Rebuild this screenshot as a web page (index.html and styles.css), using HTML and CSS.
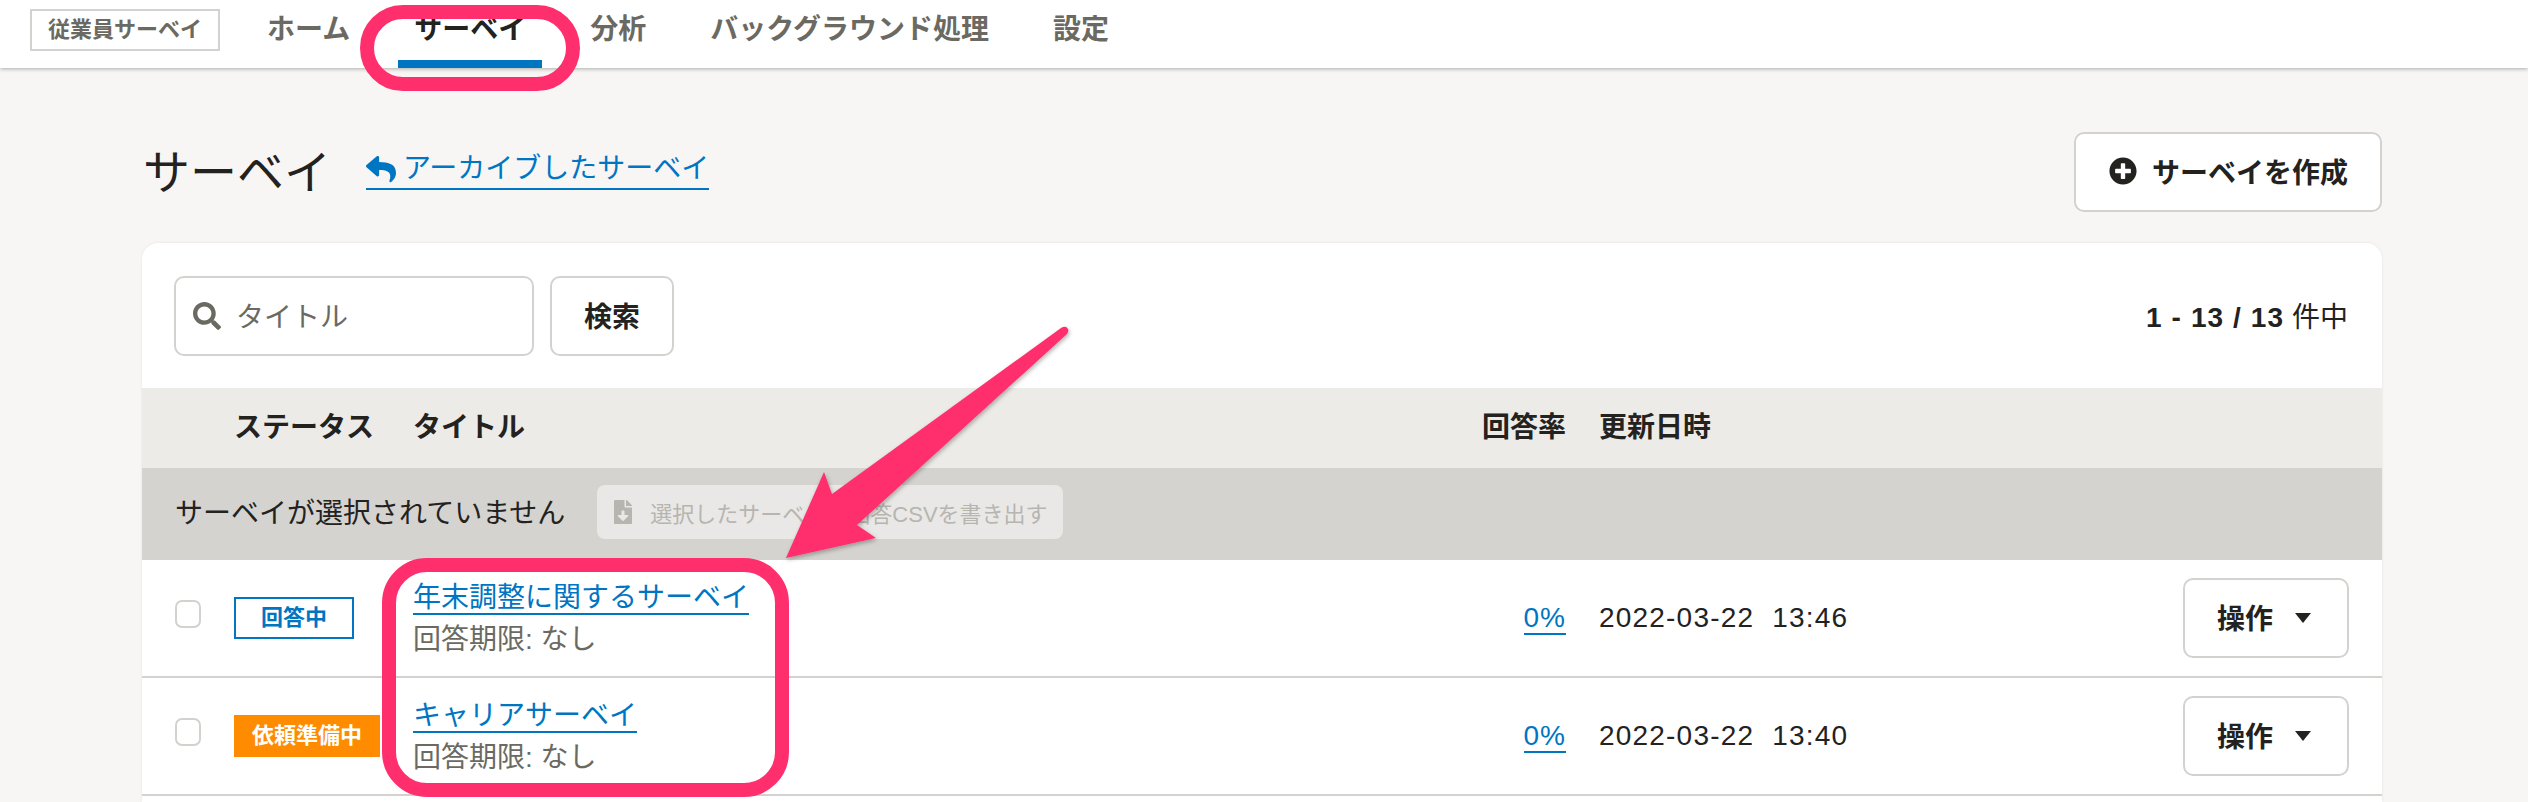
FILE: index.html
```html
<!DOCTYPE html>
<html lang="ja">
<head>
  <meta charset="UTF-8" />
  <title>サーベイ</title>
  <link rel="stylesheet" href="styles.css">
</head>
<body>
  <header class="topbar">
    <div class="brand">従業員サーベイ</div>
    <nav class="tabs">
      <a class="tab" href="#">ホーム</a>
      <a class="tab tab-active" href="#">サーベイ</a>
      <a class="tab" href="#">分析</a>
      <a class="tab" href="#">バックグラウンド処理</a>
      <a class="tab" href="#">設定</a>
    </nav>
  </header>

  <main class="page">
    <div class="page-head">
      <h1>サーベイ</h1>
      <a class="archive-link" href="#">
        <svg class="icon-reply" viewBox="0 0 512 512"><path d="M8.309 189.836L184.313 37.851C199.719 24.546 224 35.347 224 56.015v80.053c160.629 1.839 288 34.032 288 186.258 0 61.441-39.581 122.309-83.333 154.132-13.653 9.931-33.111-2.533-28.077-18.631 45.344-145.012-21.507-183.51-176.59-185.742V360c0 20.7-24.3 31.453-39.687 18.164l-176.004-152c-11.071-9.562-11.086-26.753 0-36.328z"/></svg>
        <span>アーカイブしたサーベイ</span>
      </a>
      <button class="btn btn-create">
        <svg class="icon-plus" viewBox="0 0 512 512"><path d="M256 8C119 8 8 119 8 256s111 248 248 248 248-111 248-248S393 8 256 8zm144 276c0 6.6-5.4 12-12 12h-92v92c0 6.6-5.4 12-12 12h-56c-6.6 0-12-5.4-12-12v-92h-92c-6.6 0-12-5.4-12-12v-56c0-6.6 5.4-12 12-12h92v-92c0-6.6 5.4-12 12-12h56c6.6 0 12 5.4 12 12v92h92c6.6 0 12 5.4 12 12v56z"/></svg>
        サーベイを作成
      </button>
    </div>

    <section class="card">
      <div class="toolbar">
        <div class="search-box">
          <svg class="icon-search" viewBox="0 0 512 512"><path d="M505 442.7L405.3 343c-4.5-4.5-10.6-7-17-7H372c27.6-35.3 44-79.7 44-128C416 93.1 322.9 0 208 0S0 93.1 0 208s93.1 208 208 208c48.3 0 92.7-16.4 128-44v16.3c0 6.4 2.5 12.5 7 17l99.7 99.7c9.4 9.4 24.6 9.4 33.9 0l28.3-28.3c9.4-9.4 9.4-24.6.1-34zM208 336c-70.7 0-128-57.2-128-128 0-70.7 57.2-128 128-128 70.7 0 128 57.2 128 128 0 70.7-57.2 128-128 128z"/></svg>
          <span class="placeholder">タイトル</span>
        </div>
        <button class="btn btn-search">検索</button>
        <div class="count"><b>1 - 13 / 13</b> 件中</div>
      </div>

      <div class="row row-head">
        <div></div>
        <div>ステータス</div>
        <div>タイトル</div>
        <div class="cell-rate">回答率</div>
        <div class="cell-date">更新日時</div>
        <div></div>
      </div>

      <div class="bulk">
        <span class="bulk-label">サーベイが選択されていません</span>
        <div class="bulk-btn">
          <svg class="icon-file" viewBox="0 0 384 512"><path d="M224 136V0H24C10.7 0 0 10.7 0 24v464c0 13.3 10.7 24 24 24h336c13.3 0 24-10.7 24-24V160H248c-13.2 0-24-10.8-24-24zm76.45 211.36l-96.42 95.7c-6.65 6.61-17.39 6.61-24.04 0l-96.42-95.7C73.42 337.29 80.54 320 94.82 320H160v-80c0-8.84 7.16-16 16-16h32c8.84 0 16 7.16 16 16v80h65.18c14.28 0 21.4 17.29 11.27 27.36zM377 105L279.1 7c-4.5-4.5-10.6-7-17-7H256v128h128v-6.1c0-6.3-2.5-12.4-7-16.9z"/></svg>
          選択したサーベイの回答CSVを書き出す
        </div>
      </div>

      <div class="row row-item">
        <div><span class="checkbox"></span></div>
        <div><span class="badge badge-open">回答中</span></div>
        <div class="cell-title">
          <a class="link title-link" href="#">年末調整に関するサーベイ</a>
          <div class="deadline">回答期限: なし</div>
        </div>
        <div class="cell-rate"><a class="link rate-link" href="#">0%</a></div>
        <div class="cell-date">2022-03-22&nbsp;&nbsp;13:46</div>
        <div class="cell-ops"><button class="btn btn-ops">操作<i class="caret"></i></button></div>
      </div>

      <div class="row row-item">
        <div><span class="checkbox"></span></div>
        <div><span class="badge badge-prep">依頼準備中</span></div>
        <div class="cell-title">
          <a class="link title-link" href="#">キャリアサーベイ</a>
          <div class="deadline">回答期限: なし</div>
        </div>
        <div class="cell-rate"><a class="link rate-link" href="#">0%</a></div>
        <div class="cell-date">2022-03-22&nbsp;&nbsp;13:40</div>
        <div class="cell-ops"><button class="btn btn-ops">操作<i class="caret"></i></button></div>
      </div>
    </section>
  </main>

  <!-- annotations drawn on top of the screenshot -->
  <svg class="marks" viewBox="0 0 2528 802">
    <defs>
      <filter id="markShadow" x="-10%" y="-10%" width="120%" height="120%">
        <feDropShadow dx="1" dy="2" stdDeviation="2" flood-color="#000" flood-opacity="0.3"/>
      </filter>
    </defs>
    <rect class="mark-line" x="367" y="12" width="206" height="72" rx="36" ry="36"/>
    <rect class="mark-line" x="389" y="565" width="393" height="225" rx="38" ry="38"/>
    <path class="mark-arrow" d="M786 558 L824 472 L832 494 L1061 328 Q1066 325 1068 329 Q1069 331 1067 334 L857 525 L876 538 Z"/>
  </svg>
</body>
</html>
```

FILE: styles.css
```css
* {
  box-sizing: border-box;
}

html,
body {
  height: 802px;
  overflow: hidden;
}

body {
  margin: 0;
  position: relative;
  background-color: #f7f6f4;
  color: #23221e;
  font-family: "Liberation Sans", "Noto Sans CJK JP", sans-serif;
  font-size: 28px;
}

a {
  text-decoration: none;
}

/* top bar */
.topbar {
  display: flex;
  align-items: flex-start;
  height: 68px;
  padding: 9px 0 0 30px;
  background-color: #fff;
  box-shadow: 0 1px 4px rgba(0, 0, 0, 0.3);
}

.brand {
  width: 190px;
  height: 42px;
  border: 2px solid #d3d2ce;
  color: #6b6a62;
  font-size: 22px;
  font-weight: 700;
  line-height: 38px;
  text-align: center;
}

.tabs {
  display: flex;
  margin-top: -9px;
  margin-left: 31px;
}

.tab {
  height: 68px;
  padding: 10px 16px 0;
  margin-right: 32px;
  color: #6b6a62;
  font-size: 28px;
  font-weight: 700;
  line-height: 40px;
}

.tab-active {
  color: #23221e;
  border-bottom: 8px solid #0075c2;
}

/* page */
.page {
  padding: 64px 146px 0 142px;
}

.page-head {
  display: flex;
  align-items: center;
  height: 80px;
  margin-bottom: 31px;
}

h1 {
  margin: 1px 35px 0 1px;
  font-size: 47px;
  font-weight: 400;
  line-height: 60px;
}

.archive-link {
  display: flex;
  align-self: flex-start;
  align-items: center;
  gap: 7px;
  margin-top: 10px;
  padding-top: 8px;
  border-bottom: 2px solid #0075c2;
  color: #0075c2;
  line-height: 38px;
}

.icon-reply {
  width: 30px;
  height: 30px;
  fill: #0075c2;
}

.btn {
  padding-bottom: 3px;
  background-color: #fff;
  border: 2px solid #d3d2ce;
  border-radius: 10px;
  color: #23221e;
  font-family: inherit;
  font-size: 28px;
  font-weight: 700;
}

.btn-create {
  display: flex;
  align-items: center;
  gap: 15px;
  width: 308px;
  height: 80px;
  margin-left: auto;
  padding-left: 33px;
}

.icon-plus {
  width: 28px;
  height: 28px;
  fill: #23221e;
}

/* card */
.card {
  height: 559px;
  background-color: #fff;
  border-radius: 16px 16px 0 0;
  box-shadow: 0 0 3px rgba(0, 0, 0, 0.08);
}

.toolbar {
  display: flex;
  align-items: center;
  height: 145px;
  padding: 0 34px 0 32px;
}

.search-box {
  display: flex;
  align-items: center;
  gap: 15px;
  width: 360px;
  height: 80px;
  padding-left: 17px;
  border: 2px solid #d3d2ce;
  border-radius: 10px;
}

.icon-search {
  width: 28px;
  height: 28px;
  fill: #6b6a62;
}

.placeholder {
  margin-bottom: 2px;
  color: #6b6a62;
}

.btn-search {
  width: 124px;
  height: 80px;
  margin-left: 16px;
}

.count {
  margin-bottom: 2px;
  margin-left: auto;
}

.count b {
  letter-spacing: 1.1px;
}

/* table */
.row {
  display: grid;
  grid-template-columns: 59px 179px 1053px 100px 333px 450px;
  align-items: center;
  padding: 0 33px;
}

.row-head {
  height: 80px;
  padding-bottom: 6px;
  background-color: #ecebe7;
  font-weight: 700;
}

.row-item {
  height: 118px;
  border-bottom: 2px solid #d3d2ce;
}

.cell-rate {
  text-align: right;
}

.cell-date {
  padding-left: 33px;
  letter-spacing: 1.2px;
}

.row-head .cell-date {
  letter-spacing: 0;
}

.cell-title {
  align-self: start;
  padding-top: 15px;
}

.cell-ops {
  text-align: right;
}

.link {
  color: #0075c2;
  border-bottom: 2px solid #0075c2;
}

.title-link {
  display: inline-block;
  padding-top: 8px;
  line-height: 30px;
}

.rate-link {
  letter-spacing: 1px;
}

.deadline {
  margin-top: 5px;
  color: #6b6a62;
  line-height: 40px;
}

.bulk {
  display: flex;
  align-items: center;
  gap: 32px;
  height: 92px;
  padding-left: 33px;
  background-color: #d4d3cf;
}

.bulk-label {
  margin-bottom: 6px;
}

.bulk-btn {
  display: flex;
  align-items: center;
  gap: 18px;
  width: 466px;
  height: 54px;
  margin-bottom: 4px;
  padding-left: 17px;
  border-radius: 8px;
  background-color: #e9e8e6;
  color: #b6b5b0;
  font-size: 22px;
}

.icon-file {
  width: 18px;
  height: 24px;
  fill: #b6b5b0;
}

.checkbox {
  display: block;
  width: 26px;
  height: 28px;
  margin-top: -8px;
  border: 2px solid #d3d2ce;
  border-radius: 7px;
}

.badge {
  display: inline-block;
  height: 42px;
  font-size: 22px;
  font-weight: 700;
  line-height: 38px;
  text-align: center;
}

.badge-open {
  width: 120px;
  border: 2px solid #0075c2;
  color: #0075c2;
}

.badge-prep {
  width: 146px;
  border: 2px solid #ff8c00;
  background-color: #ff8c00;
  color: #fff;
}

.btn-ops {
  display: inline-flex;
  align-items: center;
  justify-content: space-between;
  width: 166px;
  height: 80px;
  padding: 0 36px 3px 32px;
}

.caret {
  width: 0;
  height: 0;
  margin-top: 3px;
  border-top: 10px solid #23221e;
  border-left: 8px solid transparent;
  border-right: 8px solid transparent;
}

/* annotation layer */
.marks {
  position: absolute;
  top: 0;
  left: 0;
  width: 2528px;
  height: 802px;
}

.mark-line {
  fill: none;
  stroke: #ff2f6d;
  stroke-width: 14;
}

.mark-arrow {
  fill: #ff2f6d;
  filter: url(#markShadow);
}
```
